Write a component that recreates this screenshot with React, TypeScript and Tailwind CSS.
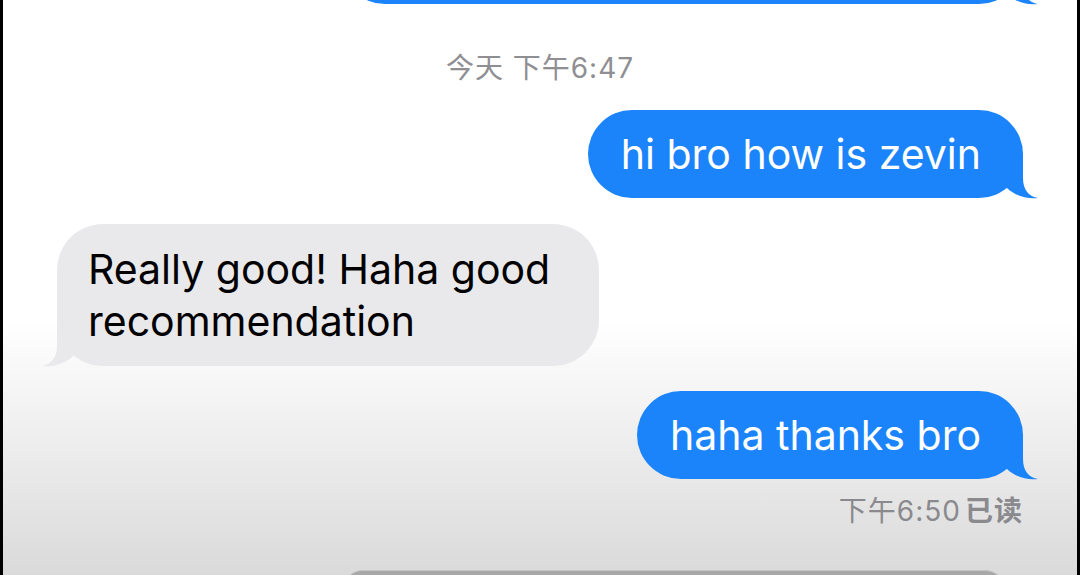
import React from "react";

const FONT = {
  fontFamily: '"Inter", "Noto Sans CJK SC", sans-serif',
};

function Tail({ side, color }: { side: "left" | "right"; color: string }) {
  // tail drawn for the right side, mirrored for incoming bubbles
  return (
    <svg
      width="45"
      height="50"
      viewBox="0 0 45 50"
      className={
        side === "right"
          ? "absolute right-[-15px] bottom-0 overflow-visible"
          : "absolute left-[-15px] bottom-0 overflow-visible -scale-x-100"
      }
    >
      <path
        d="M30 6 L30 30 C30 42 36 48.5 45 50 C35 51.5 22 48 14 40 L8 20 Z"
        fill={color}
      />
    </svg>
  );
}

function Outgoing({
  text,
  className,
}: {
  text: string;
  className?: string;
}) {
  return (
    <div className={"flex justify-end pr-[54px] " + (className ?? "")}>
      <div className="relative flex h-[88px] items-center rounded-full bg-[#1b84fa] pl-[33px] pr-[42px]">
        <span className="text-[41px] leading-none text-white">{text}</span>
        <Tail side="right" color="#1b84fa" />
      </div>
    </div>
  );
}

export default function App() {
  return (
    <div
      className="h-[575px] w-[1080px] overflow-hidden bg-black px-[3px]"
      style={FONT}
    >
      <div className="flex h-full flex-col overflow-hidden bg-[linear-gradient(to_bottom,#ffffff_0%,#ffffff_56%,#dadada_100%)]">
        {/* previous message, cut off at the top */}
        <div className="mt-[-84px] flex justify-end pr-[54px]">
          <div className="relative h-[88px] w-[682px] rounded-full bg-[#1b84fa]">
            <Tail side="right" color="#1b84fa" />
          </div>
        </div>

        <div className="mt-[49px] text-center text-[28px] leading-[30px] tracking-[1px] text-[#8e8e93]">
          今天 下午6:47
        </div>

        <Outgoing text="hi bro how is zevin" className="mt-[27px]" />

        <div className="mt-[26px] flex justify-start pl-[54px]">
          <div className="relative w-[542px] rounded-[46px] bg-[#e9e9eb] py-[19px] pl-[31px] pr-[20px]">
            <p className="text-[41px] leading-[52px] text-black">
              Really good! Haha good recommendation
            </p>
            <Tail side="left" color="#e9e9eb" />
          </div>
        </div>

        <Outgoing text="haha thanks bro" className="mt-[25px]" />

        <div className="mt-[17px] flex justify-end pr-[54px] text-[28px] leading-[30px] tracking-[1px] text-[#8a8a8e]">
          <span>下午6:50</span>
          <span className="ml-[4px] font-semibold">已读</span>
        </div>

        {/* next bubble, only its top edge shows */}
        <div className="mt-[44px] flex justify-start pl-[340px]">
          <div className="h-[20px] w-[662px] rounded-t-[20px] border-t border-[#c4c4c4] bg-[#a8a8a8]" />
        </div>
      </div>
    </div>
  );
}
